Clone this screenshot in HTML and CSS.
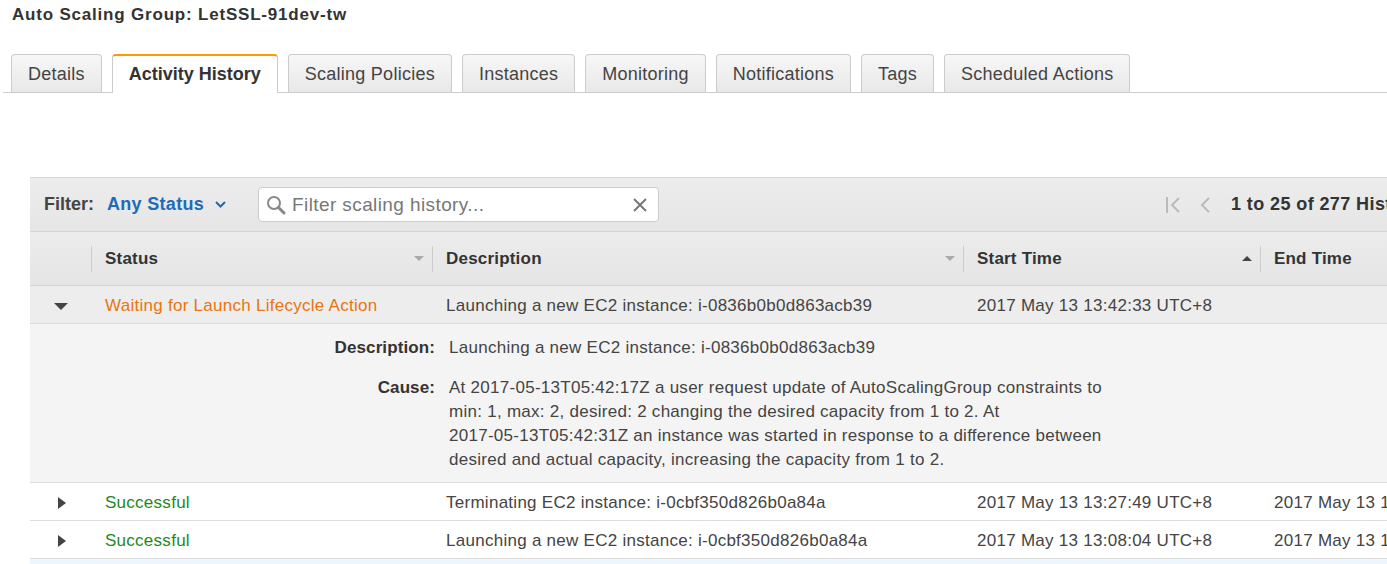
FILE: index.html
```html
<!DOCTYPE html>
<html>
<head>
<meta charset="utf-8">
<link rel="stylesheet" href="styles.css">
</head>
<body>
<div class="title">Auto Scaling Group: LetSSL-91dev-tw</div>
<div class="tabs">
  <div class="tab">Details</div>
  <div class="tab active">Activity History</div>
  <div class="tab">Scaling Policies</div>
  <div class="tab">Instances</div>
  <div class="tab">Monitoring</div>
  <div class="tab">Notifications</div>
  <div class="tab">Tags</div>
  <div class="tab">Scheduled Actions</div>
</div>

<div class="panel">
  <div class="filterbar">
    <span class="filter-label">Filter:</span>
    <span class="filter-value">Any Status
      <svg class="chev" width="11" height="7" viewBox="0 0 11 7"><path d="M1 1 L5.5 5.5 L10 1" fill="none" stroke="#1e6bb8" stroke-width="2"/></svg>
    </span>
    <div class="search">
      <svg class="mag" width="20" height="20" viewBox="0 0 20 20"><circle cx="8" cy="8" r="6" fill="none" stroke="#888" stroke-width="2"/><path d="M12.5 12.5 L18 18" stroke="#888" stroke-width="3" stroke-linecap="round"/></svg>
      <span class="placeholder">Filter scaling history...</span>
      <svg class="clear" width="16" height="16" viewBox="0 0 16 16"><path d="M2 2 L14 14 M14 2 L2 14" stroke="#777" stroke-width="2"/></svg>
    </div>
    <div class="pager">
      <svg width="17" height="18" viewBox="0 0 17 18"><path d="M2 1 V17" stroke="#bbb" stroke-width="2"/><path d="M14 2 L7 9 L14 16" fill="none" stroke="#bbb" stroke-width="2"/></svg>
      <svg class="prev" width="12" height="18" viewBox="0 0 12 18"><path d="M10 2 L3 9 L10 16" fill="none" stroke="#bbb" stroke-width="2"/></svg>
      <span class="pager-text">1 to 25 of 277 History</span>
    </div>
  </div>

  <div class="grid head">
    <div class="th first"></div>
    <div class="th"><div class="th-inner"><span>Status</span><span class="sort down"></span></div></div>
    <div class="th"><div class="th-inner"><span>Description</span><span class="sort down"></span></div></div>
    <div class="th"><div class="th-inner"><span>Start Time</span><span class="sort up"></span></div></div>
    <div class="th"><div class="th-inner"><span>End Time</span></div></div>
  </div>

  <div class="grid row open">
    <div class="td exp"><span class="tri-down"></span></div>
    <div class="td status-wait">Waiting for Launch Lifecycle Action</div>
    <div class="td">Launching a new EC2 instance: i-0836b0b0d863acb39</div>
    <div class="td">2017 May 13 13:42:33 UTC+8</div>
    <div class="td"></div>
  </div>
  <div class="detail">
    <div class="dlabel">Description:</div>
    <div class="dvalue">Launching a new EC2 instance: i-0836b0b0d863acb39</div>
    <div class="dlabel">Cause:</div>
    <div class="dvalue cause">At <span class="nw">2017-05-13T05:42:17Z</span> a user request update of AutoScalingGroup constraints to min: 1, max: 2, desired: 2 changing the desired capacity from 1 to 2. At <span class="nw">2017-05-13T05:42:31Z</span> an instance was started in response to a difference between desired and actual capacity, increasing the capacity from 1 to 2.</div>
  </div>
  <div class="grid row">
    <div class="td exp"><span class="tri-right"></span></div>
    <div class="td status-ok">Successful</div>
    <div class="td">Terminating EC2 instance: i-0cbf350d826b0a84a</div>
    <div class="td">2017 May 13 13:27:49 UTC+8</div>
    <div class="td">2017 May 13 13:28:31 UTC+8</div>
  </div>
  <div class="grid row">
    <div class="td exp"><span class="tri-right"></span></div>
    <div class="td status-ok">Successful</div>
    <div class="td">Launching a new EC2 instance: i-0cbf350d826b0a84a</div>
    <div class="td">2017 May 13 13:08:04 UTC+8</div>
    <div class="td">2017 May 13 13:08:37 UTC+8</div>
  </div>
  <div class="grid row hl">
    <div class="td exp"></div>
    <div class="td"></div>
    <div class="td"></div>
    <div class="td"></div>
    <div class="td"></div>
  </div>
</div>
</body>
</html>
```

FILE: styles.css
```css
html, body {
  margin: 0;
  padding: 0;
  overflow: hidden;
  background: #fff;
  font-family: "Liberation Sans", Arial, Helvetica, sans-serif;
  color: #444;
}

.title {
  padding: 5px 12px 0;
  line-height: 20px;
  font-size: 17px;
  font-weight: bold;
  letter-spacing: 0.8px;
  color: #333;
}

.tabs {
  display: flex;
  gap: 10px;
  margin: 29px 0 0 3px;
  padding-left: 8px;
  height: 38px;
  border-bottom: 1px solid #ccc;
}

.tab {
  box-sizing: border-box;
  height: 38px;
  padding: 0 16px;
  border: 1px solid #ccc;
  border-bottom: none;
  border-radius: 4px 4px 0 0;
  background: linear-gradient(#f7f7f7, #e8e8e8);
  font-size: 18px;
  letter-spacing: 0.25px;
  line-height: 38px;
  color: #444;
  white-space: nowrap;
}

.tab.active {
  height: 39px;
  background: #fff;
  border-top: 2px solid #f90;
  font-weight: bold;
  letter-spacing: 0;
  color: #333;
  line-height: 37px;
}

.panel {
  margin: 84px 0 0 30px;
  width: 1560px;
  border-top: 1px solid #d9d9d9;
}

.filterbar {
  display: flex;
  align-items: center;
  height: 53px;
  padding-left: 14px;
  background: linear-gradient(#ececec, #e6e6e6);
  border-bottom: 1px solid #d4d4d4;
}

.filter-label {
  font-size: 18px;
  font-weight: bold;
  color: #444;
}

.filter-value {
  display: flex;
  align-items: center;
  margin-left: 13px;
  font-size: 18px;
  font-weight: bold;
  letter-spacing: 0.3px;
  color: #1e6bb8;
}

.chev {
  margin-left: 11px;
  margin-top: -1px;
}

.search {
  box-sizing: border-box;
  display: flex;
  align-items: center;
  width: 401px;
  height: 35px;
  margin-left: 32px;
  padding: 0 10px 0 7px;
  background: #fff;
  border: 1px solid #ccc;
  border-radius: 4px;
}

.mag {
  flex: none;
}

.placeholder {
  flex: 1;
  margin-left: 6px;
  font-size: 19px;
  letter-spacing: 0.4px;
  color: #777;
}

.clear {
  flex: none;
}

.pager {
  display: flex;
  align-items: center;
  margin-left: 506px;
}

.prev {
  margin-left: 17px;
}

.pager-text {
  margin-left: 20px;
  font-size: 18px;
  font-weight: bold;
  letter-spacing: 0.4px;
  color: #333;
  white-space: nowrap;
}

.grid {
  display: grid;
  grid-template-columns: 61px 341px 531px 297px 330px;
}

.head {
  height: 53px;
  background: linear-gradient(#ececec, #e5e5e5);
  border-bottom: 1px solid #d4d4d4;
  align-items: center;
}

.th-inner {
  display: flex;
  align-items: center;
  justify-content: space-between;
  height: 26px;
  padding: 0 8px 0 13px;
  border-left: 1px solid #ccc;
  font-size: 17px;
  font-weight: bold;
  letter-spacing: 0.2px;
  color: #333;
}

.sort {
  width: 0;
  height: 0;
  border-left: 5px solid transparent;
  border-right: 5px solid transparent;
}

.sort.down {
  border-top: 5px solid #aaa;
}

.sort.up {
  border-bottom: 5px solid #444;
}

.row {
  height: 37px;
  align-items: center;
  border-bottom: 1px solid #ddd;
  font-size: 17px;
  letter-spacing: 0.27px;
  color: #444;
}

.row.open {
  background: #ededed;
}

.row.hl {
  background: #eef6fd;
  border-bottom: none;
}

.td {
  padding-left: 14px;
  padding-top: 2px;
  white-space: nowrap;
}

.td.exp {
  padding-left: 0;
  display: flex;
  justify-content: center;
  align-items: center;
}

.tri-down {
  width: 0;
  height: 0;
  border-left: 7px solid transparent;
  border-right: 7px solid transparent;
  border-top: 7px solid #444;
  margin-top: 1px;
}

.tri-right {
  width: 0;
  height: 0;
  border-top: 6px solid transparent;
  border-bottom: 6px solid transparent;
  border-left: 8px solid #444;
  margin-left: 2px;
}

.status-wait {
  color: #e8750f;
}

.status-ok {
  color: #1d8a21;
}

.detail {
  display: grid;
  grid-template-columns: 405px 660px;
  column-gap: 14px;
  row-gap: 16px;
  padding: 12px 0 10px;
  background: #f4f4f4;
  border-bottom: 1px solid #ddd;
  font-size: 17px;
  line-height: 24px;
  letter-spacing: 0.27px;
}

.nw {
  white-space: nowrap;
}

.dlabel {
  text-align: right;
  font-weight: bold;
  letter-spacing: 0.1px;
  color: #333;
}

.dvalue {
  color: #444;
}
```
